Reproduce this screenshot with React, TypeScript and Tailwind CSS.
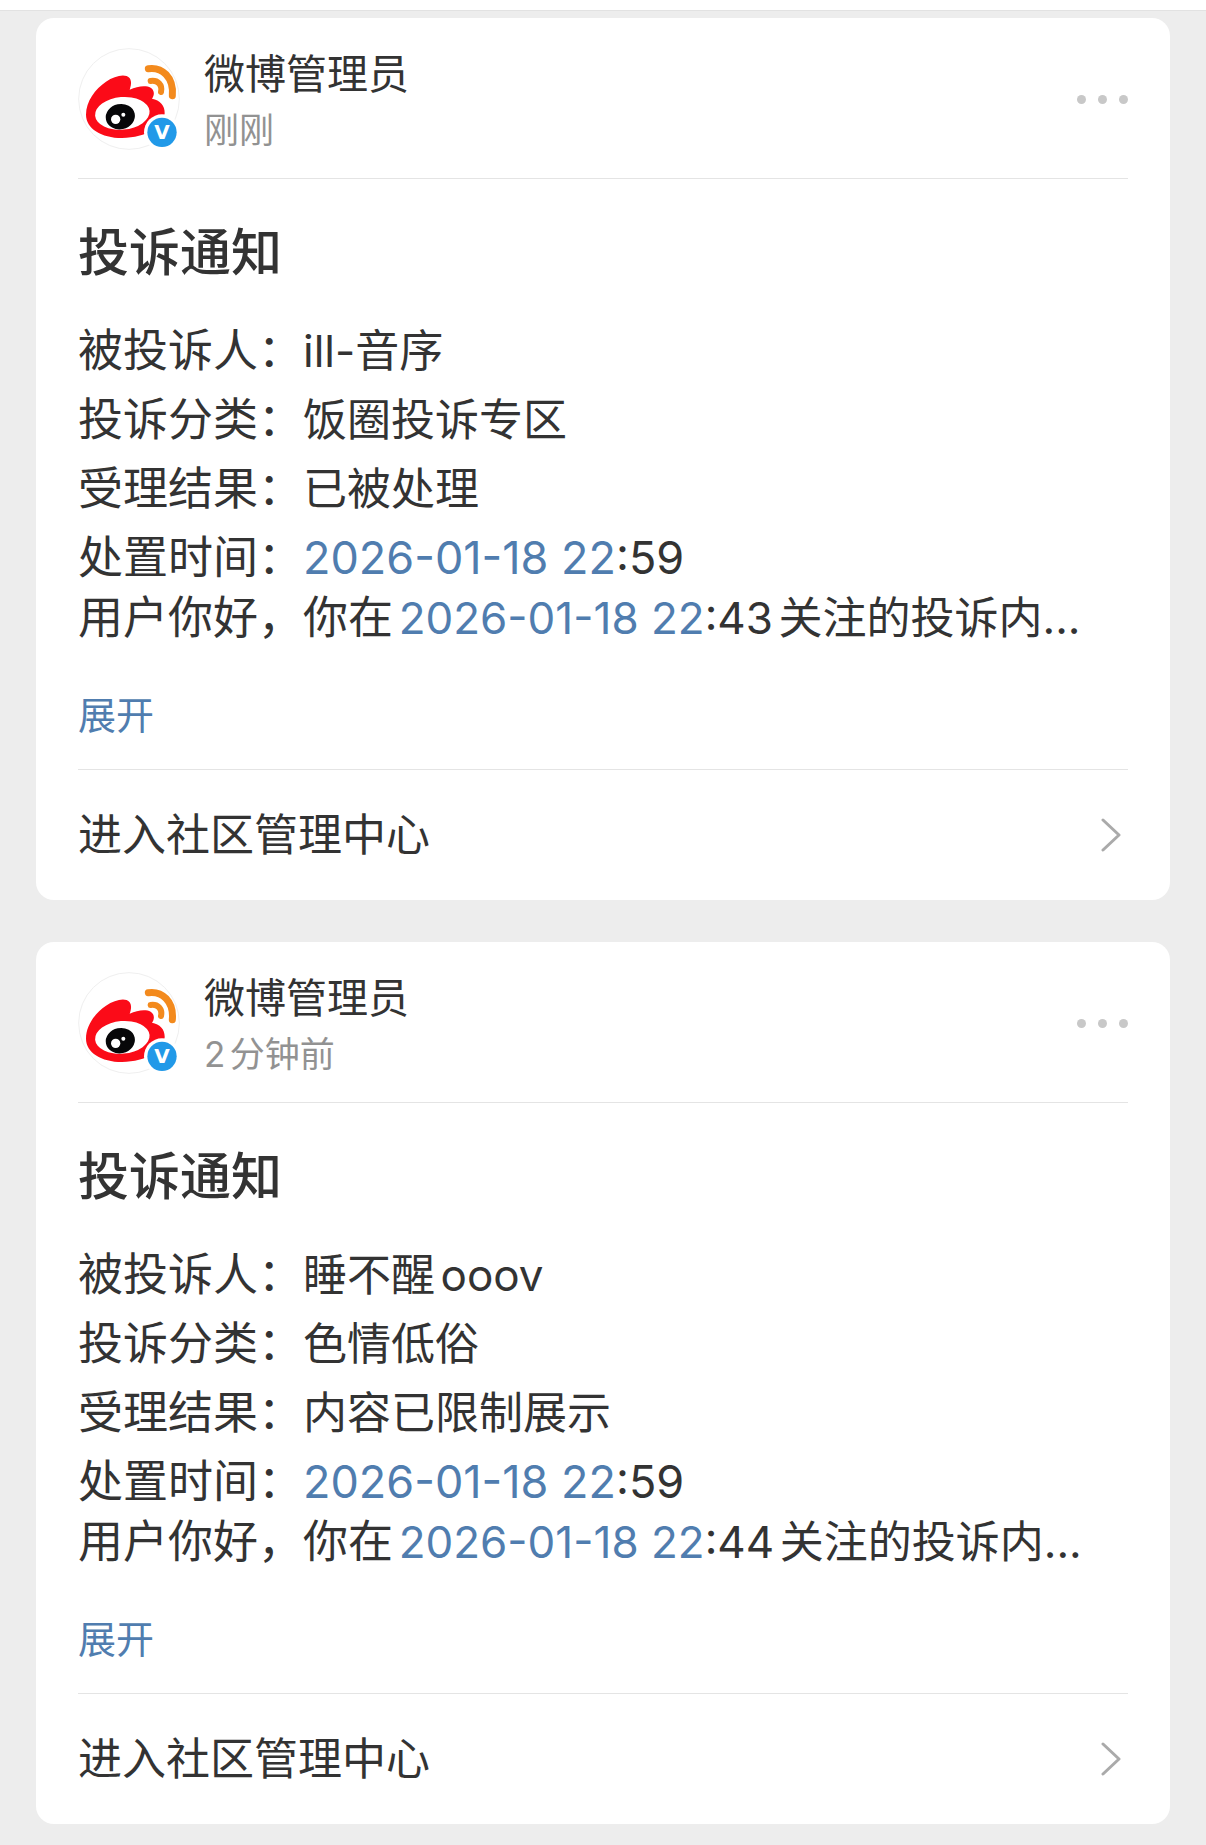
import React from 'react';

interface Notice {
  id: number;
  time: string;
  target: string;
  category: string;
  result: string;
  followedMinute: string;
}

const notices: Notice[] = [
  { id: 1, time: '刚刚', target: 'ill-音序', category: '饭圈投诉专区', result: '已被处理', followedMinute: '43' },
  { id: 2, time: '2分钟前', target: '睡不醒ooov', category: '色情低俗', result: '内容已限制展示', followedMinute: '44' },
];

const Avatar: React.FC = () => {
  return (
    <svg viewBox="0 0 306 306" className="w-[102px] h-[102px] shrink-0" role="img" aria-label="微博管理员">
      <circle cx="153" cy="153" r="151" fill="#fff" stroke="#efefef" strokeWidth="3" />
      <path
        d="M24 200 C24 160 52 122 84 101 C106 86 130 79 146 84 C161 90 162 106 155 125 C178 114 204 111 218 119 C230 127 230 141 222 152 C246 157 261 172 260 196 C258 236 206 269 132 270 C70 270 24 241 24 200 Z"
        fill="#fb0b18"
      />
      <ellipse cx="133" cy="196" rx="82" ry="49" fill="#fff" transform="rotate(-5 133 196)" />
      <ellipse cx="127" cy="206" rx="44" ry="38" fill="#070709" transform="rotate(-12 127 206)" />
      <circle cx="113" cy="214" r="14" fill="#fff" />
      <circle cx="136" cy="200" r="6" fill="#fff" />
      <path d="M211 62 C252 56 288 88 283 143" fill="none" stroke="#f38a1d" strokeWidth="21" strokeLinecap="round" />
      <path d="M218 99 C239 96 254 110 249 132" fill="none" stroke="#f38a1d" strokeWidth="18" strokeLinecap="round" />
      <circle cx="252" cy="253" r="54" fill="#fff" />
      <circle cx="252" cy="253" r="44" fill="#2199e8" />
      <text x="252" y="274" textAnchor="middle" fill="#fff" fontSize="60" fontWeight="700" fontFamily="DejaVu Sans, sans-serif">
        V
      </text>
    </svg>
  );
};

const DateTime: React.FC<{ minute: string }> = ({ minute }) => {
  return (
    <>
      <a href="tel:2026011822" className="text-[#507daf]">
        2026-01-18 22
      </a>
      :{minute}
    </>
  );
};

const NoticeCard: React.FC<{ notice: Notice }> = ({ notice }) => {
  return (
    <article className="bg-white rounded-[18px] px-[42px]">
      <header className="flex items-start pt-[30px] pb-[22px] border-b border-[#e4e4e4]">
        <Avatar />
        <div className="ml-6 grow flex flex-col gap-1 leading-[52px]">
          <div className="text-[41px]">微博管理员</div>
          <div className="text-[35px] text-[#929292]">{notice.time}</div>
        </div>
        <button type="button" aria-label="更多" className="flex items-center gap-3 h-[102px]">
          <span className="size-[9px] rounded-full bg-[#c8c8c8]" />
          <span className="size-[9px] rounded-full bg-[#c8c8c8]" />
          <span className="size-[9px] rounded-full bg-[#c8c8c8]" />
        </button>
      </header>

      <h2 className="mt-11 text-[51px] leading-[60px] font-medium">投诉通知</h2>

      <div className="mt-[38px] text-[45px] leading-[60px]">
        <div className="flex flex-col gap-[9px]">
          <p>
            被投诉人：<span className="text-[44px]">{notice.target}</span>
          </p>
          <p>
            投诉分类：<span className="text-[44px]">{notice.category}</span>
          </p>
          <p>
            受理结果：<span className="text-[44px]">{notice.result}</span>
          </p>
          <p>
            处置时间：<DateTime minute="59" />
          </p>
        </div>
        <p>
          用户你好，你在
          <span className="text-[44px]">
            <DateTime minute={notice.followedMinute} />关注的投诉内...
          </span>
        </p>
      </div>

      <button type="button" className="block mt-10 mb-[27px] text-[38px] leading-[54px] text-[#507daf]">
        展开
      </button>

      <a href="#community" className="flex items-center justify-between py-[35px] pr-[7px] border-t border-[#e4e4e4] text-[44px] leading-[60px]">
        进入社区管理中心
        <svg viewBox="0 0 20 34" className="w-5 h-[34px]" fill="none" stroke="#aaa" strokeWidth="3" strokeLinecap="round" strokeLinejoin="round">
          <path d="M2 2 L18 17 L2 32" />
        </svg>
      </a>
    </article>
  );
};

const App: React.FC = () => {
  return (
    <div className="min-h-screen bg-[#ededed] text-[#333] font-['Inter','Noto_Sans_CJK_SC',sans-serif] [text-autospace:normal]">
      <div className="h-[11px] bg-white border-b border-[#e2e2e2]" />
      <main className="flex flex-col gap-[42px] px-9 pt-[7px] pb-[21px]">
        {notices.map((notice) => (
          <NoticeCard key={notice.id} notice={notice} />
        ))}
      </main>
    </div>
  );
};

export default App;
